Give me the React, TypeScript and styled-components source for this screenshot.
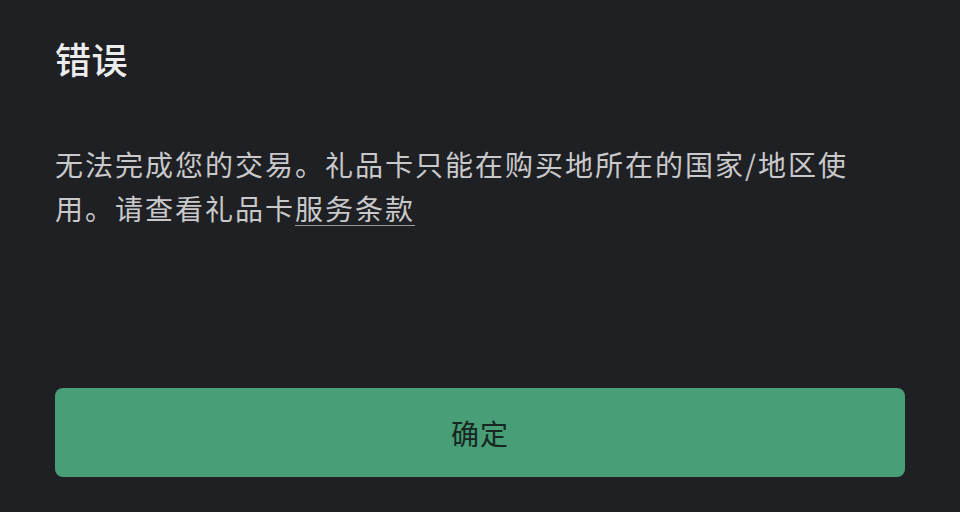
import styled, { createGlobalStyle } from "styled-components";

const GlobalStyle = createGlobalStyle`
  html, body {
    margin: 0;
    padding: 0;
    background: #1f2024;
  }
  body {
    font-family: "Noto Sans CJK SC", "Noto Sans", sans-serif;
  }
`;

function App() {
  return (
    <>
      <GlobalStyle />
      <Dialog>
        <Title>错误</Title>
        <Message>
          无法完成您的交易。礼品卡只能在购买地所在的国家/地区使用。请查看礼品卡
          <TermsLink>服务条款</TermsLink>
        </Message>
        <ConfirmButton type="button">确定</ConfirmButton>
      </Dialog>
    </>
  );
}

export default App;

const Dialog = styled.div`
  width: 960px;
  height: 512px;
  box-sizing: border-box;
  padding: 0 55px 35px 55px;
  display: flex;
  flex-direction: column;
  background: #1f2024;
  overflow: hidden;
`;

const Title = styled.h1`
  margin: 34px 0 0 0;
  font-size: 36px;
  line-height: 48px;
  font-weight: 500;
  color: #ececec;
  letter-spacing: 0.5px;
`;

const Message = styled.p`
  margin: 60px 0 0 0;
  max-width: 810px;
  font-size: 28px;
  line-height: 44px;
  font-weight: 400;
  color: #c9c9cb;
  letter-spacing: 2px;
`;

const TermsLink = styled.span`
  text-decoration: underline;
  text-decoration-color: #9a9a9c;
  text-underline-offset: 5px;
  text-decoration-thickness: 1px;
`;

const ConfirmButton = styled.button`
  margin-top: auto;
  width: 100%;
  height: 89px;
  border: none;
  border-radius: 8px;
  background: #489e77;
  color: #17271f;
  font-family: "Noto Sans CJK SC", "Noto Sans", sans-serif;
  font-size: 28px;
  letter-spacing: 1px;
  cursor: pointer;
`;
